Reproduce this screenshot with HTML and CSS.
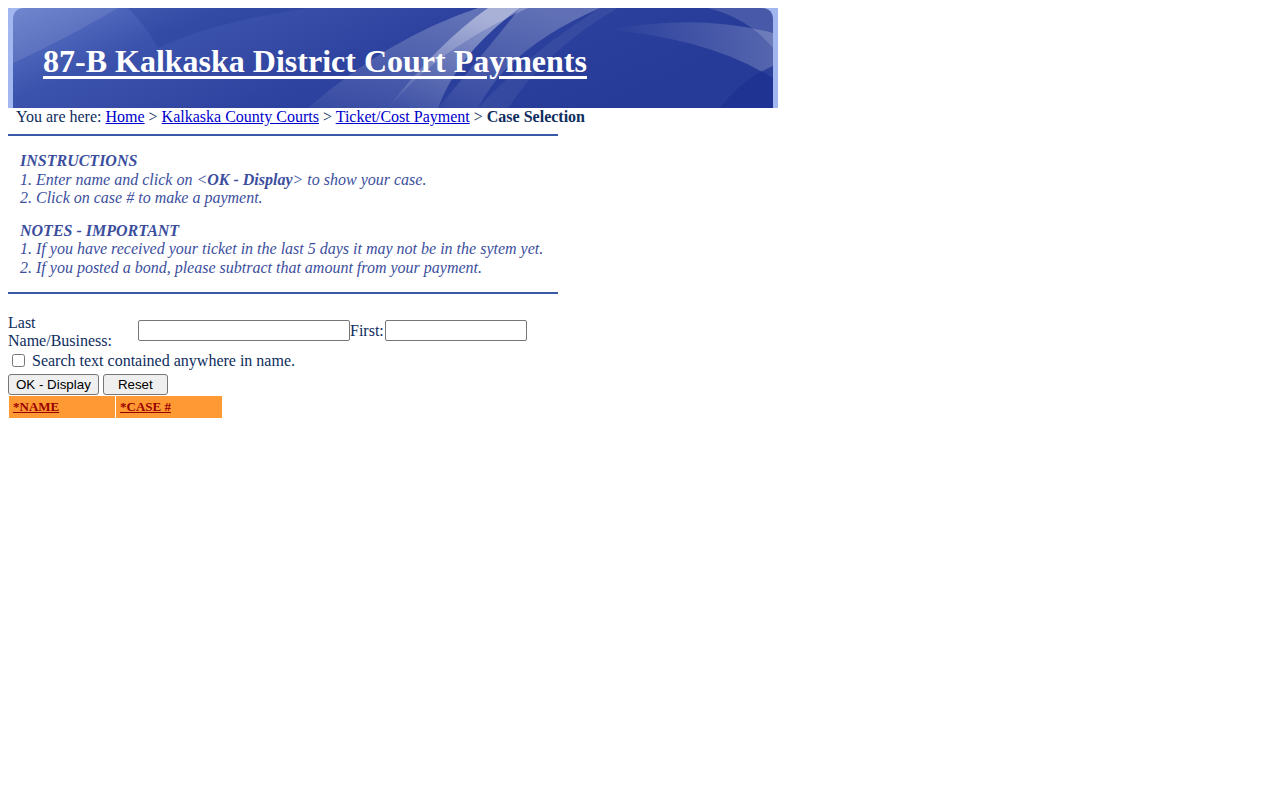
FILE: index.html
```html
<!DOCTYPE html>
<html>
<head>
<meta charset="utf-8">
<title>87-B Kalkaska District Court Payments</title>
<link rel="stylesheet" href="styles.css">
</head>
<body>
<div class="banner">
  <svg class="banner-art" width="770" height="100" viewBox="0 0 770 100" xmlns="http://www.w3.org/2000/svg">
    <defs>
      <linearGradient id="bg" x1="0" y1="0" x2="1" y2="0.3">
        <stop offset="0" stop-color="#6079c9"/>
        <stop offset="0.25" stop-color="#3c53ad"/>
        <stop offset="0.55" stop-color="#2e439f"/>
        <stop offset="1" stop-color="#263b98"/>
      </linearGradient>
      <linearGradient id="swA" x1="0" y1="1" x2="0.6" y2="0">
        <stop offset="0" stop-color="#ffffff" stop-opacity="0.08"/>
        <stop offset="1" stop-color="#ffffff" stop-opacity="0.45"/>
      </linearGradient>
      <linearGradient id="swB" x1="0" y1="1" x2="0.6" y2="0">
        <stop offset="0" stop-color="#ffffff" stop-opacity="0.05"/>
        <stop offset="1" stop-color="#ffffff" stop-opacity="0.25"/>
      </linearGradient>
      <linearGradient id="swR" x1="0" y1="0" x2="1" y2="0">
        <stop offset="0" stop-color="#ffffff" stop-opacity="0"/>
        <stop offset="1" stop-color="#ffffff" stop-opacity="0.22"/>
      </linearGradient>
    </defs>
    <rect width="770" height="100" fill="#a2b6f0"/>
    <path d="M5 100 V12 Q5 0 17 0 H753 Q765 0 765 12 V100 Z" fill="url(#bg)"/>
    <path d="M5 12 Q5 0 17 0 H110 Q50 35 5 55 Z" fill="#ffffff" opacity="0.1"/>
    <path d="M120 0 H300 Q200 15 150 40 Q140 20 120 0 Z" fill="#1d3290" opacity="0.25"/>
    <path d="M300 100 Q380 30 470 0 H520 Q430 40 380 100 Z" fill="url(#swB)"/>
    <path d="M380 100 Q430 35 480 0 H512 Q450 45 430 100 Z" fill="url(#swA)"/>
    <path d="M430 100 Q480 40 512 0 H592 Q500 40 470 100 Z" fill="url(#swB)"/>
    <path d="M470 100 Q520 45 592 0 H610 Q540 40 500 100 Z" fill="#ffffff" opacity="0.06"/>
    <path d="M600 22 Q690 5 765 25 V70 Q700 30 600 22 Z" fill="url(#swR)"/>
    <path d="M700 0 H753 Q765 0 765 12 V40 Q740 10 700 0 Z" fill="#ffffff" opacity="0.15"/>
    <path d="M712 100 Q735 70 765 58 V100 Z" fill="#1c3190" opacity="0.7"/>
  </svg>
  <h1 class="title"><a href="#">87-B Kalkaska District Court Payments</a></h1>
</div>
<div class="crumbs">You are here: <a href="#">Home</a> &gt; <a href="#">Kalkaska County Courts</a> &gt; <a href="#">Ticket/Cost Payment</a> &gt; <b>Case Selection</b></div>
<hr class="rule">
<div class="info">
  <p><b>INSTRUCTIONS</b><br>1. Enter name and click on &lt;<b>OK - Display</b>&gt; to show your case.<br>2. Click on case # to make a payment.</p>
  <p><b>NOTES - IMPORTANT</b><br>1. If you have received your ticket in the last 5 days it may not be in the sytem yet.<br>2. If you posted a bond, please subtract that amount from your payment.</p>
</div>
<hr class="rule">
<form class="search">
  <div class="name-row">
    <label class="lbl">Last Name/Business:</label>
    <input type="text" class="in-last">
    <span>First:</span>
    <input type="text" class="in-first">
  </div>
  <div class="check-row"><input type="checkbox" class="chk"> Search text contained anywhere in name.</div>
  <div class="btn-row">
    <button type="button" class="btn">OK - Display</button>
    <button type="reset" class="btn btn-reset">Reset</button>
  </div>
</form>
<table class="results">
  <tr><th><a href="#">*NAME</a></th><th><a href="#">*CASE #</a></th></tr>
</table>
</body>
</html>
```

FILE: styles.css
```css
body {
  margin: 8px;
  font-family: "Liberation Serif", "Times New Roman", serif;
  font-size: 16px;
  color: #0e2d5e;
  background: #ffffff;
}
.banner {
  position: relative;
  width: 770px;
  height: 100px;
}
.banner-art {
  position: absolute;
  left: 0;
  top: 0;
}
.title {
  position: relative;
  margin: 0;
  padding: 33px 0 0 35px;
  font-size: 32px;
  line-height: 40px;
  font-weight: bold;
}
.title a {
  color: #ffffff;
  text-decoration: underline;
  text-decoration-thickness: 3px;
  text-underline-offset: 4px;
}
.crumbs {
  padding-left: 8px;
  line-height: 18px;
  height: 18px;
}
.crumbs a {
  color: #0000cc;
}
.crumbs b {
  color: #0e2d5e;
}
.rule {
  width: 550px;
  margin: 8px 0 0 0;
  border: 0;
  height: 2px;
  background: #3a58a8;
}
.info {
  padding: 0 0 0 12px;
  color: #3b4e9e;
  font-style: italic;
  font-size: 16px;
  line-height: 18.5px;
}
.info p {
  margin: 16px 0 0 0;
}
.info p + p {
  margin-top: 14px;
}
.info + .rule {
  margin-top: 15px;
}
.search {
  margin: 20px 0 0 0;
}
.name-row {
  display: flex;
  align-items: center;
}
.lbl {
  width: 130px;
  line-height: 18px;
}
.in-last,
.in-first {
  height: 21px;
  box-sizing: border-box;
  margin: 0 0 3px 0;
  border: 1px solid #767676;
  border-radius: 2px;
}
.in-last {
  width: 212px;
}
.in-first {
  width: 142px;
  margin-left: 1px;
}
.name-row span {
  margin-bottom: 2px;
}
.check-row {
  display: flex;
  align-items: center;
  height: 22px;
  margin-top: 0;
}
.chk {
  margin: 0 7px 2px 4px;
  width: 13px;
  height: 13px;
}
.btn-row {
  display: flex;
  gap: 4px;
  margin-top: 2px;
}
.btn {
  font-family: "Liberation Sans", Arial, sans-serif;
  font-size: 13.33px;
  height: 21px;
  padding: 1px 7px;
  margin: 0;
  border: 1px solid #767676;
  border-radius: 3px;
  background: #efefef;
  color: #000000;
}
.btn-reset {
  width: 65px;
}
.results {
  border-spacing: 1px;
  margin-top: 0;
}
.results th {
  width: 98px;
  height: 22px;
  padding: 0 4px;
  background: #ff9933;
  text-align: left;
  font-size: 13px;
  font-weight: bold;
}
.results th a {
  color: #990000;
}
```
